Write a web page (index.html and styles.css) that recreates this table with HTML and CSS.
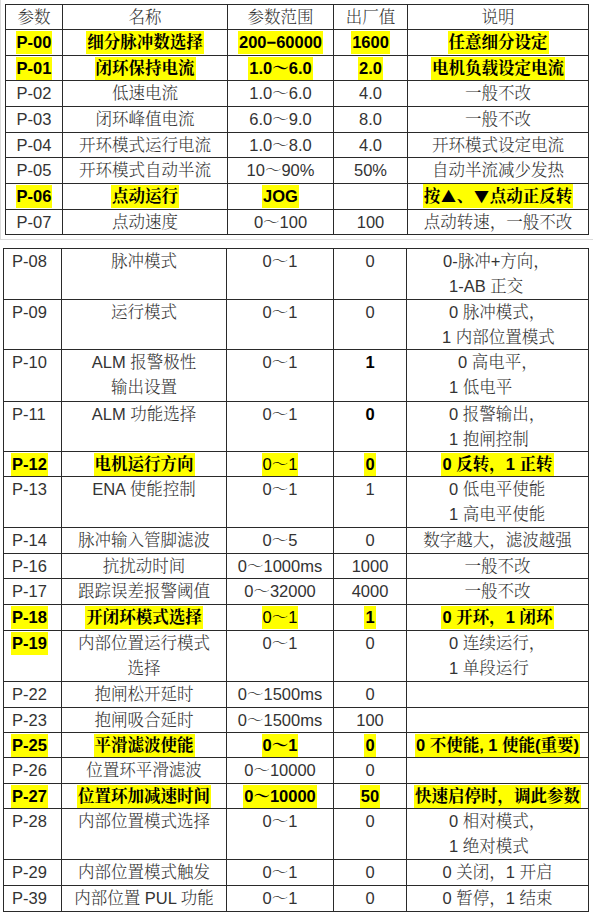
FILE: index.html
```html
<!DOCTYPE html>
<html lang="zh-CN">
<head>
<meta charset="utf-8">
<title>参数表</title>
<link rel="stylesheet" href="styles.css">
</head>
<body>
<div class="frame">
  <div class="grid t1">
    <div class="c">参数</div><div class="c">名称</div><div class="c">参数范围</div><div class="c">出厂值</div><div class="c">说明</div>

    <div class="c"><span class="hl b">P-00</span></div><div class="c"><span class="hl b">细分脉冲数选择</span></div><div class="c"><span class="hl b">200−60000</span></div><div class="c"><span class="hl b">1600</span></div><div class="c"><span class="hl b">任意细分设定</span></div>

    <div class="c"><span class="hl b">P-01</span></div><div class="c"><span class="hl b">闭环保持电流</span></div><div class="c"><span class="hl b">1.0～6.0</span></div><div class="c"><span class="hl b">2.0</span></div><div class="c"><span class="hl b">电机负载设定电流</span></div>

    <div class="c">P-02</div><div class="c">低速电流</div><div class="c">1.0～6.0</div><div class="c">4.0</div><div class="c">一般不改</div>
    <div class="c">P-03</div><div class="c">闭环峰值电流</div><div class="c">6.0～9.0</div><div class="c">8.0</div><div class="c">一般不改</div>
    <div class="c">P-04</div><div class="c">开环模式运行电流</div><div class="c">1.0～8.0</div><div class="c">4.0</div><div class="c">开环模式设定电流</div>
    <div class="c">P-05</div><div class="c">开环模式自动半流</div><div class="c">10～90%</div><div class="c">50%</div><div class="c">自动半流减少发热</div>

    <div class="c"><span class="hl b">P-06</span></div><div class="c"><span class="hl b">点动运行</span></div><div class="c"><span class="hl b">JOG</span></div><div class="c"></div><div class="c"><span class="hl b">按<span class="sym">▲</span>、<span class="sym">▼</span>点动正反转</span></div>

    <div class="c">P-07</div><div class="c">点动速度</div><div class="c">0～100</div><div class="c">100</div><div class="c">点动转速，一般不改</div>
  </div>
</div>

<div class="grid t2">
  <div class="c id">P-08</div><div class="c">脉冲模式</div><div class="c">0～1</div><div class="c">0</div><div class="c lines"><span class="ln sl6">0-脉冲+方向，</span><span class="ln">1-AB 正交</span></div>
  <div class="c id">P-09</div><div class="c">运行模式</div><div class="c">0～1</div><div class="c">0</div><div class="c lines"><span class="ln">0 脉冲模式，</span><span class="ln sl7">1 内部位置模式</span></div>
  <div class="c id">P-10</div><div class="c"><span class="ln">ALM 报警极性</span><span class="ln">输出设置</span></div><div class="c">0～1</div><div class="c"><span class="b">1</span></div><div class="c lines"><span class="ln sr9">0 高电平，</span><span class="ln">1 低电平</span></div>
  <div class="c id">P-11</div><div class="c">ALM 功能选择</div><div class="c">0～1</div><div class="c"><span class="b">0</span></div><div class="c lines"><span class="ln">0 报警输出，</span><span class="ln">1 抱闸控制</span></div>
  <div class="c id"><span class="hl b">P-12</span></div><div class="c"><span class="hl b">电机运行方向</span></div><div class="c"><span class="hl">0～1</span></div><div class="c"><span class="hl b">0</span></div><div class="c"><span class="hl b">0 反转，1 正转</span></div>
  <div class="c id">P-13</div><div class="c">ENA 使能控制</div><div class="c">0～1</div><div class="c">1</div><div class="c lines"><span class="ln">0 低电平使能</span><span class="ln">1 高电平使能</span></div>
  <div class="c id">P-14</div><div class="c">脉冲输入管脚滤波</div><div class="c">0～5</div><div class="c">0</div><div class="c">数字越大，滤波越强</div>
  <div class="c id">P-16</div><div class="c">抗扰动时间</div><div class="c">0～1000ms</div><div class="c">1000</div><div class="c">一般不改</div>
  <div class="c id">P-17</div><div class="c">跟踪误差报警阈值</div><div class="c">0～32000</div><div class="c">4000</div><div class="c">一般不改</div>
  <div class="c id"><span class="hl b">P-18</span></div><div class="c"><span class="hl b">开闭环模式选择</span></div><div class="c"><span class="hl">0～1</span></div><div class="c"><span class="hl b">1</span></div><div class="c"><span class="hl b">0 开环，1 闭环</span></div>
  <div class="c id"><span class="hl b">P-19</span></div><div class="c"><span class="ln">内部位置运行模式</span><span class="ln">选择</span></div><div class="c">0～1</div><div class="c">0</div><div class="c lines"><span class="ln">0 连续运行，</span><span class="ln">1 单段运行</span></div>
  <div class="c id">P-22</div><div class="c">抱闸松开延时</div><div class="c">0～1500ms</div><div class="c">0</div><div class="c"></div>
  <div class="c id">P-23</div><div class="c">抱闸吸合延时</div><div class="c">0～1500ms</div><div class="c">100</div><div class="c"></div>
  <div class="c id"><span class="hl b">P-25</span></div><div class="c"><span class="hl b">平滑滤波使能</span></div><div class="c"><span class="hl b">0～1</span></div><div class="c"><span class="hl b">0</span></div><div class="c"><span class="hl b">0 不使能, 1 使能(重要)</span></div>
  <div class="c id">P-26</div><div class="c">位置环平滑滤波</div><div class="c">0～10000</div><div class="c">0</div><div class="c"></div>
  <div class="c id"><span class="hl b">P-27</span></div><div class="c"><span class="hl b">位置环加减速时间</span></div><div class="c"><span class="hl b">0～10000</span></div><div class="c"><span class="hl b">50</span></div><div class="c"><span class="hl b">快速启停时，调此参数</span></div>
  <div class="c id">P-28</div><div class="c">内部位置模式选择</div><div class="c">0～1</div><div class="c">0</div><div class="c lines"><span class="ln">0 相对模式，</span><span class="ln">1 绝对模式</span></div>
  <div class="c id">P-29</div><div class="c">内部位置模式触发</div><div class="c">0～1</div><div class="c">0</div><div class="c">0 关闭，1 开启</div>
  <div class="c id">P-39</div><div class="c">内部位置 PUL 功能</div><div class="c">0～1</div><div class="c">0</div><div class="c">0 暂停，1 结束</div>
</div>
</body>
</html>
```

FILE: styles.css
```css
html, body {
  margin: 0;
  padding: 0;
  background: #fff;
}

body {
  font-family: "Liberation Sans", "Noto Serif CJK SC", "Noto Sans CJK SC", sans-serif;
  font-size: 16.5px;
  font-weight: 300;
  color: #333;
}

.frame {
  width: 588px;
  border-left: 1px solid #dcdcdc;
  border-bottom: 1px solid #dcdcdc;
  padding: 4px 0 4px 4px;
}

.grid {
  display: grid;
  gap: 1px;
  background: #2a2a2a;
  border: 1px solid #2a2a2a;
}

.t1 {
  width: 582px;
  grid-template-columns: 56px 164px 105px 73px 180px;
  grid-template-rows: 24px 25px 24px 25px 25px 24px 25px 25px 24px;
}

.t2 {
  margin: 8px 0 0 3px;
  width: 584px;
  grid-template-columns: 57px 164px 106px 72px 181px;
  grid-template-rows: 50px 49px 51px 49px 24px 50px 25px 24px 25px 25px 50px 25px 24px 24px 25px 24px 50px 25px 25px;
}

.c {
  background: #fff;
  text-align: center;
  line-height: 25px;
  white-space: nowrap;
  overflow: visible;
}

.t1 .c {
  line-height: 24.5px;
}

.id {
  text-align: left;
  padding-left: 8px;
}

.id .hl {
  margin-left: -1px;
}

.lines {
  text-align: left;
  padding-left: 42px;
}

.ln {
  display: block;
}

.sl6 { margin-left: -6px; }
.sl7 { margin-left: -7px; }
.sr9 { margin-left: 9px; }

.b {
  font-weight: 700;
  color: #000;
}

.hl {
  display: inline-block;
  background: #ffff00;
  line-height: 23px;
  padding: 0 1px;
  color: #000;
}

.sym {
  font-family: "Noto Sans CJK SC", sans-serif;
  display: inline-block;
  width: 16.5px;
  text-align: center;
  font-size: 15px;
}
```
